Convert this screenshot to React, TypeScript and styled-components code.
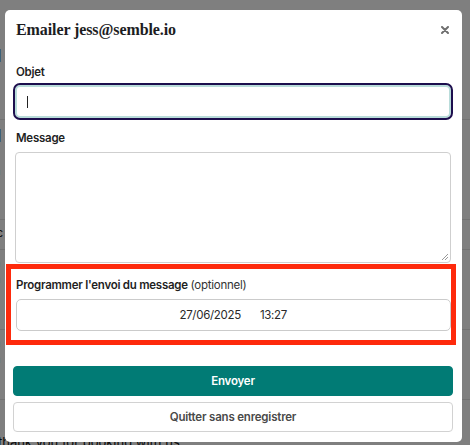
import React from "react";
import styled, { createGlobalStyle } from "styled-components";

const GlobalStyle = createGlobalStyle`
  html, body { margin: 0; padding: 0; }
  body {
    width: 470px;
    height: 445px;
    overflow: hidden;
    background: #ffffff;
    font-family: Inter, "Noto Sans", sans-serif;
  }
`;

const Page = styled.div`
  position: relative;
  width: 470px;
  height: 445px;
  overflow: hidden;
  background: #ffffff;
`;

const BgList = styled.div`
  display: flex;
  flex-direction: column;
  padding-top: 40px;
`;

const BgRow = styled.div<{ $h: number }>`
  height: ${(p) => p.$h}px;
  border-bottom: 1px solid #e4e4e4;
  padding: 6px 0 0 0;
  box-sizing: border-box;
  display: flex;
  flex-direction: column;
  gap: 2px;
`;

const BgBig = styled.div`
  font-size: 17px;
  font-weight: 700;
  color: #111;
  margin-left: -6px;
`;

const BgText = styled.div`
  font-size: 11px;
  color: #222;
  margin-left: -6px;
`;

const BgFooter = styled.div`
  font-size: 13px;
  line-height: 16px;
  color: #111;
  margin-left: -2px;
  padding-top: 34px;
`;

const Overlay = styled.div`
  position: absolute;
  inset: 0;
  background: rgba(0, 0, 0, 0.5);
`;

const Modal = styled.div`
  position: absolute;
  left: 4.5px;
  top: 10px;
  width: 457px;
  height: 431.5px;
  background: #ffffff;
  border-radius: 5px;
  box-sizing: border-box;
  display: flex;
  flex-direction: column;
`;

const Header = styled.div`
  display: flex;
  align-items: center;
  justify-content: space-between;
  box-sizing: border-box;
  height: 40px;
  padding: 0 12px 0 11.5px;
`;

const Title = styled.h2`
  margin: 0;
  font-family: "Liberation Serif", "DejaVu Serif", serif;
  font-weight: 700;
  font-size: 16px;
  line-height: 20px;
  color: #1d1d1f;
  letter-spacing: -0.1px;
`;

const CloseButton = styled.button`
  border: none;
  background: none;
  padding: 0;
  width: 9px;
  height: 9px;
  display: flex;
  align-items: center;
  justify-content: center;
  cursor: pointer;
`;

const Body = styled.div`
  display: flex;
  flex-direction: column;
  padding: 0 8.5px;
`;

const Field = styled.div<{ $top: number }>`
  display: flex;
  flex-direction: column;
  padding-top: ${(p) => p.$top}px;
`;

const Label = styled.label`
  font-size: 11.5px;
  font-weight: 600;
  letter-spacing: -0.25px;
  color: #1f1f1f;
  padding-left: 3px;
  line-height: 16px;
  margin-bottom: 6px;
`;

const Optional = styled.span`
  font-weight: 400;
  color: #333;
`;

const TextInput = styled.div`
  margin-top: -3px;
  height: 37px;
  box-sizing: border-box;
  border: 2px solid #1d0f4e;
  border-radius: 7px;
  box-shadow: inset 0 0 0 2px #b9dcda;
  display: flex;
  align-items: center;
  padding-left: 12px;
`;

const Caret = styled.span`
  width: 1px;
  height: 12px;
  background: #222;
`;

const TextArea = styled.div`
  position: relative;
  height: 111px;
  margin: 0 2.5px 0 2px;
  box-sizing: border-box;
  border: 1px solid #cfcfcf;
  border-radius: 4px;
`;

const Grip = styled.svg`
  position: absolute;
  right: 1px;
  bottom: 1px;
`;

const Highlight = styled.div`
  position: relative;
`;

const HighlightFrame = styled.div`
  position: absolute;
  left: -7px;
  right: -3px;
  top: 1px;
  bottom: -14px;
  border: 5px solid #fe2a0c;
  pointer-events: none;
`;

const DateInput = styled.div`
  height: 32px;
  box-sizing: border-box;
  margin: 0 2.5px 0 3px;
  border: 1px solid #cbcbcb;
  border-radius: 5px;
  display: flex;
  align-items: center;
  justify-content: center;
  gap: 19px;
  font-size: 11.5px;
  letter-spacing: -0.3px;
  color: #2a2a2a;
`;

const Actions = styled.div`
  display: flex;
  flex-direction: column;
  gap: 6px;
  padding: 35px 8.5px 0 8.5px;
`;

const Button = styled.button<{ $primary?: boolean }>`
  height: 30px;
  width: 100%;
  border-radius: 4px;
  box-sizing: border-box;
  font-family: Inter, "Noto Sans", sans-serif;
  font-size: 11.5px;
  letter-spacing: -0.2px;
  font-weight: 600;
  cursor: pointer;
  border: 1px solid ${(p) => (p.$primary ? "#017b75" : "#d2d2d2")};
  background: ${(p) => (p.$primary ? "#017b75" : "#ffffff")};
  color: ${(p) => (p.$primary ? "#ffffff" : "#4a4a4a")};
`;

export default function App() {
  return (
    <Page>
      <GlobalStyle />
      <BgList>
        <BgRow $h={80}>
          <BgBig>1</BgBig>
          <BgText>a</BgText>
          <BgText>r</BgText>
        </BgRow>
        <BgRow $h={100}>
          <BgBig>1</BgBig>
          <BgText>r</BgText>
          <BgText>n</BgText>
        </BgRow>
        <BgRow $h={30}>
          <BgText>ic</BgText>
        </BgRow>
        <BgRow $h={80}>
          <BgText>h</BgText>
          <BgText>n</BgText>
        </BgRow>
        <BgRow $h={70}>
          <BgText>h</BgText>
          <BgText>n</BgText>
        </BgRow>
        <BgFooter>thank you for booking with us</BgFooter>
      </BgList>
      <Overlay />
      <Modal role="dialog">
        <Header>
          <Title>Emailer jess@semble.io</Title>
          <CloseButton aria-label="Fermer">
            <svg width="8" height="8" viewBox="0 0 8 8">
              <path d="M1 1 L7 7 M7 1 L1 7" stroke="#6f6f6f" strokeWidth="2" strokeLinecap="round" />
            </svg>
          </CloseButton>
        </Header>
        <Body>
          <Field $top={14}>
            <Label>Objet</Label>
            <TextInput>
              <Caret />
            </TextInput>
          </Field>
          <Field $top={10}>
            <Label>Message</Label>
            <TextArea>
              <Grip width="9" height="9" viewBox="0 0 9 9">
                <path d="M8 2 L2 8 M8 5 L5 8" stroke="#999" strokeWidth="1" />
              </Grip>
            </TextArea>
          </Field>
          <Highlight>
            <Field $top={14}>
              <Label>
                Programmer l'envoi du message <Optional>(optionnel)</Optional>
              </Label>
              <DateInput>
                <span>27/06/2025</span>
                <span>13:27</span>
              </DateInput>
            </Field>
            <HighlightFrame />
          </Highlight>
        </Body>
        <Actions>
          <Button $primary>Envoyer</Button>
          <Button>Quitter sans enregistrer</Button>
        </Actions>
      </Modal>
    </Page>
  );
}
